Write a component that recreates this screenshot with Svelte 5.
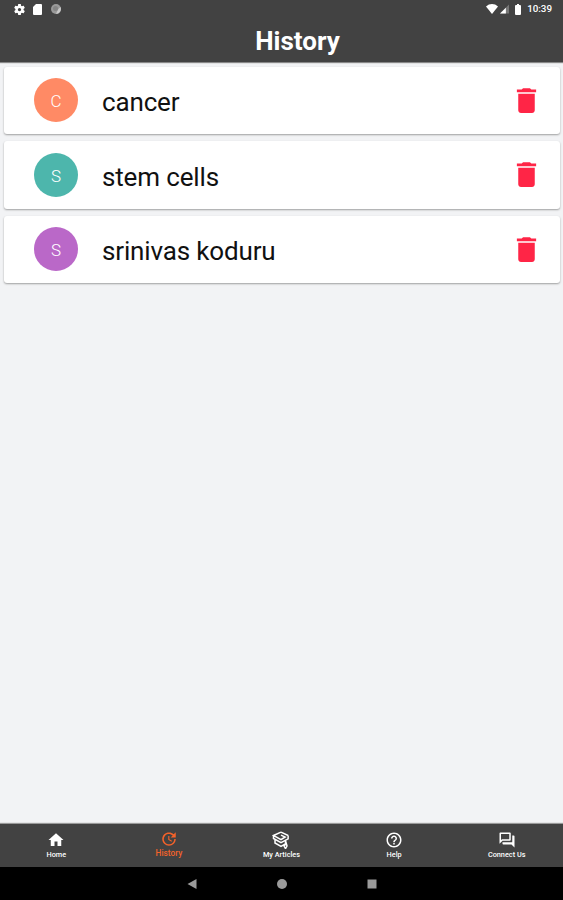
<script>
  const items = [
    { letter: "C", text: "cancer", color: "#ff8a65" },
    { letter: "S", text: "stem cells", color: "#4db6ac" },
    { letter: "S", text: "srinivas koduru", color: "#ba68c8" },
  ];

  const tabs = [
    {
      label: "Home",
      path: "M10 20v-6h4v6h5v-8h3L12 3 2 12h3v8z",
    },
    {
      label: "History",
      active: true,
      path: "M21 10.12h-6.78l2.74-2.82c-2.73-2.7-7.15-2.8-9.88-.1-2.73 2.71-2.73 7.08 0 9.79s7.15 2.71 9.88 0C18.32 15.65 19 14.08 19 12.1h2c0 1.98-.88 4.55-2.64 6.29-3.51 3.48-9.21 3.48-12.72 0-3.5-3.47-3.53-9.11-.02-12.58s9.14-3.47 12.65 0L21 3v7.12zM12.5 8v4.25l3.5 2.08-.72 1.21L11 13V8h1.5z",
    },
    {
      label: "My Articles",
      outline: true,
      path: "M12 1.500 2 6l10 5.500L17.500 8 12 5.500M21.500 6 12 1.500M2 6v4l10 5.500 9.500-5V6M4 12v4l8 4.500 7-4M18 13v5l-2 2 2 3.500 2-3.500z",
    },
    {
      label: "Help",
      path: "M11 18h2v-2h-2v2zm1-16C6.480 2 2 6.480 2 12s4.480 10 10 10 10-4.480 10-10S17.520 2 12 2zm0 18c-4.410 0-8-3.590-8-8s3.590-8 8-8 8 3.590 8 8-3.590 8-8 8zm0-14c-2.210 0-4 1.790-4 4h2c0-1.100.9-2 2-2s2 .9 2 2c0 2-3 1.750-3 5h2c0-2.250 3-2.500 3-5 0-2.210-1.790-4-4-4z",
    },
    {
      label: "Connect Us",
      path: "M15 4v7H5.170L4 12.170V4h11m1-2H3c-.55 0-1 .45-1 1v14l4-4h10c.55 0 1-.45 1-1V3c0-.55-.45-1-1-1zm5 4h-2v9H6v2c0 .55.45 1 1 1h11l4 4V7c0-.55-.45-1-1-1z",
    },
  ];
</script>

<div class="screen">
  <header>
    <div class="status">
      <svg class="gear" viewBox="0 0 24 24">
        <path
          d="M19.430 12.980c.04-.32.07-.64.07-.98s-.03-.66-.07-.98l2.110-1.650c.19-.15.24-.42.12-.64l-2-3.460c-.12-.22-.39-.3-.61-.22l-2.490 1c-.52-.4-1.080-.73-1.690-.98l-.38-2.650C14.460 2.180 14.250 2 14 2h-4c-.25 0-.46.18-.49.42l-.38 2.650c-.61.25-1.170.59-1.690.98l-2.490-1c-.23-.09-.49 0-.61.22l-2 3.460c-.13.22-.07.49.12.64l2.110 1.650c-.04.32-.07.65-.07.98s.03.66.07.98l-2.110 1.650c-.19.15-.24.42-.12.64l2 3.460c.12.22.39.3.61.22l2.490-1c.52.4 1.080.73 1.690.98l.38 2.650c.03.24.24.42.49.42h4c.25 0 .46-.18.49-.42l.38-2.650c.61-.25 1.170-.59 1.690-.98l2.490 1c.23.09.49 0 .61-.22l2-3.460c.12-.22.07-.49-.12-.64l-2.110-1.650zM12 15c-1.650 0-3-1.350-3-3s1.350-3 3-3 3 1.350 3 3-1.350 3-3 3z"
        />
      </svg>
      <svg class="card-icon" viewBox="0 0 9 11">
        <path d="M3 0h5a1 1 0 0 1 1 1v9a1 1 0 0 1-1 1H1a1 1 0 0 1-1-1V3z" />
      </svg>
      <svg class="sync" viewBox="0 0 10 10">
        <circle cx="5" cy="5" r="5" fill="#9a9a9a" />
        <path d="M5 10a5 5 0 0 0 4.500-7L7 5.500z" fill="#c9c9c9" />
        <circle cx="4.500" cy="4.500" r="2.500" fill="#858585" />
      </svg>
      <span class="spacer"></span>
      <svg class="wifi" viewBox="0 0 12 10">
        <path d="M0 2.500C3.500-.8 8.500-.8 12 2.500L6 10z" />
      </svg>
      <svg class="signal" viewBox="0 0 10 10">
        <path d="M10 0v10H0z" fill="#777" />
        <path d="M6.500 3.500V10H0z" />
      </svg>
      <svg class="battery" viewBox="0 0 6 11">
        <path d="M2 0h2v1h1a1 1 0 0 1 1 1v8a1 1 0 0 1-1 1H1a1 1 0 0 1-1-1V2a1 1 0 0 1 1-1h1z" />
      </svg>
      <span class="time">10:39</span>
    </div>
    <h1>History</h1>
  </header>

  <main>
    {#each items as item}
      <div class="card">
        <span class="avatar" style="background-color: {item.color}">{item.letter}</span>
        <span class="text">{item.text}</span>
        <svg class="delete" viewBox="0 0 24 24">
          <path
            d="M6 19c0 1.100.9 2 2 2h8c1.100 0 2-.9 2-2V7H6v12zM19 4h-3.500l-1-1h-5l-1 1H5v2h14V4z"
          />
        </svg>
      </div>
    {/each}
  </main>

  <nav>
    {#each tabs as tab}
      <div class="tab" class:active={tab.active}>
        <svg class:outline={tab.outline} viewBox="0 0 24 24"><path d={tab.path} /></svg>
        <span>{tab.label}</span>
      </div>
    {/each}
  </nav>

  <footer>
    <svg viewBox="0 0 10 10"><path d="M9.500 0v10L.5 5z" /></svg>
    <svg viewBox="0 0 10 10"><circle cx="5" cy="5" r="5" /></svg>
    <svg viewBox="0 0 10 10"><path d="M.5.5h9v9h-9z" /></svg>
  </footer>
</div>

<style>
  :global(body) {
    margin: 0;
  }

  .screen {
    display: flex;
    flex-direction: column;
    width: 563px;
    height: 900px;
    background-color: #f2f3f5;
    font-family: Roboto, "Liberation Sans", sans-serif;
    overflow: hidden;
  }

  svg {
    display: block;
    flex: none;
    fill: currentColor;
  }

  header {
    height: 62px;
    background-color: #424242;
    color: #fff;
    box-shadow: 0 1px 1px #888;
  }

  .status {
    display: flex;
    align-items: center;
    height: 18px;
    padding: 0 11px 0 13px;
  }

  .gear {
    width: 13px;
    height: 13px;
    margin-right: 7px;
  }

  .card-icon {
    width: 9px;
    height: 11px;
    margin-right: 9px;
  }

  .sync {
    width: 10px;
    height: 10px;
  }

  .spacer {
    flex: 1;
  }

  .wifi {
    width: 12px;
    height: 10px;
    margin-right: 2px;
  }

  .signal {
    width: 9px;
    height: 10px;
    margin-right: 6px;
  }

  .battery {
    width: 6px;
    height: 11px;
    margin-right: 6px;
  }

  .time {
    font-size: 9.800px;
    font-weight: 500;
    line-height: 18px;
  }

  h1 {
    margin: 0;
    padding-left: 32px;
    font-size: 26px;
    font-weight: 700;
    line-height: 46px;
    text-align: center;
  }

  main {
    display: flex;
    flex: 1;
    flex-direction: column;
    gap: 7px;
    padding: 4.500px 3px 0 4px;
  }

  .card {
    display: flex;
    align-items: center;
    box-sizing: border-box;
    height: 67.500px;
    padding: 0 17px 0 30px;
    border-radius: 3px;
    background-color: #fff;
    box-shadow: 0 1px 2px rgba(0, 0, 0, 0.35);
  }

  .avatar {
    width: 44px;
    height: 44px;
    border-radius: 50%;
    color: #fff;
    font-size: 17px;
    font-weight: 300;
    line-height: 46px;
    text-align: center;
  }

  .text {
    flex: 1;
    margin-left: 24px;
    padding-top: 4px;
    color: #111;
    font-size: 26px;
    letter-spacing: -0.15px;
  }

  .delete {
    width: 33px;
    height: 33px;
    color: #ff2546;
  }

  nav {
    display: flex;
    height: 43px;
    background-color: #424242;
    box-shadow: 0 -1px 1px #999;
    color: #fff;
  }

  .tab {
    display: flex;
    flex: 1;
    flex-direction: column;
    align-items: center;
    gap: 1px;
    padding-top: 7px;
    font-size: 7.300px;
    font-weight: 500;
    line-height: 9px;
  }

  .tab svg {
    width: 18px;
    height: 18px;
  }

  .tab svg.outline {
    fill: none;
    stroke: currentColor;
    stroke-width: 2;
  }

  .tab.active {
    padding-top: 6px;
    color: #f4622a;
    font-size: 8.300px;
  }

  footer {
    display: flex;
    align-items: center;
    justify-content: center;
    gap: 80px;
    height: 33px;
    background-color: #000;
    color: #9b9b9b;
  }

  footer svg {
    width: 10px;
    height: 10px;
  }
</style>
